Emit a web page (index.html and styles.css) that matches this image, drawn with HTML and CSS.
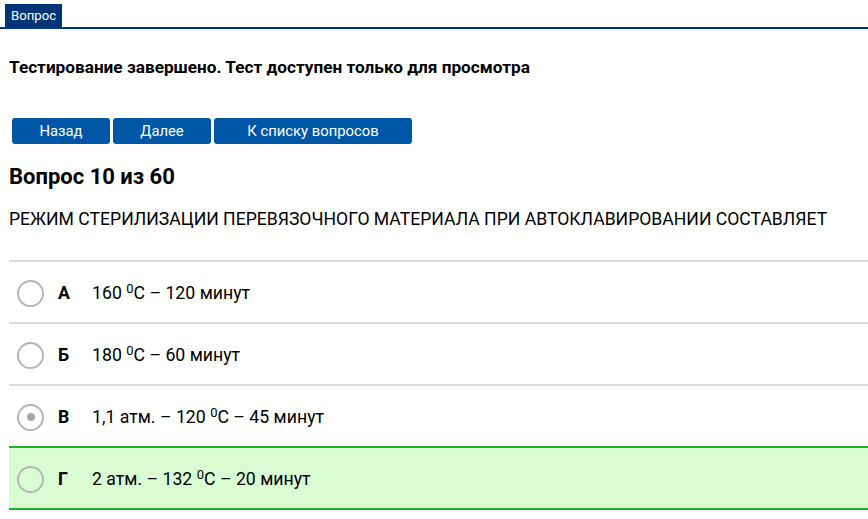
FILE: index.html
```html
<!DOCTYPE html>
<html lang="ru">
<head>
<meta charset="utf-8">
<title>Вопрос</title>
<link rel="stylesheet" href="styles.css">
</head>
<body>
<div class="tabs"><span class="tab">Вопрос</span></div>
<div class="content">
  <div class="status">Тестирование завершено. Тест доступен только для просмотра</div>
  <div class="nav">
    <button class="btn btn-sm">Назад</button>
    <button class="btn btn-sm">Далее</button>
    <button class="btn btn-lg">К списку вопросов</button>
  </div>
  <h2 class="qnum">Вопрос 10 из 60</h2>
  <div class="qtext">РЕЖИМ СТЕРИЛИЗАЦИИ ПЕРЕВЯЗОЧНОГО МАТЕРИАЛА ПРИ АВТОКЛАВИРОВАНИИ СОСТАВЛЯЕТ</div>
  <ul class="answers">
    <li class="answer"><span class="radio"></span><span class="letter">А</span><span class="atext">160 <sup>0</sup>С – 120 минут</span></li>
    <li class="answer"><span class="radio"></span><span class="letter">Б</span><span class="atext">180 <sup>0</sup>С – 60 минут</span></li>
    <li class="answer"><span class="radio checked"></span><span class="letter">В</span><span class="atext">1,1 атм. – 120 <sup>0</sup>С – 45 минут</span></li>
    <li class="answer correct"><span class="radio"></span><span class="letter">Г</span><span class="atext">2 атм. – 132 <sup>0</sup>С – 20 минут</span></li>
  </ul>
</div>
</body>
</html>
```
FILE: styles.css
```css
* { box-sizing: border-box; }
body {
  margin: 0;
  font-family: Roboto, "Liberation Sans", Arial, sans-serif;
  color: #000;
  background: #fff;
}
.tabs {
  padding: 4px 0 0 5px;
  border-bottom: 2px solid #003478;
  display: flex;
}
.tab {
  background: #003478;
  color: #fff;
  font-size: 13.2px;
  height: 23px;
  line-height: 23px;
  padding: 0 6px;
}
.content {
  padding-left: 9px;
}
.status {
  margin-top: 29px;
  font-size: 17.2px;
  line-height: 18px;
  font-weight: 700;
}
.nav {
  margin-top: 42px;
  padding-left: 3px;
  display: flex;
  gap: 3px;
}
.btn {
  height: 26px;
  border: none;
  border-radius: 3px;
  background: #0056a6;
  color: #fff;
  font-family: Roboto, "Liberation Sans", Arial, sans-serif;
  font-size: 14.8px;
  line-height: 26px;
  padding: 0;
}
.btn-sm { width: 98px; }
.btn-lg { width: 198px; }
.qnum {
  margin: 21px 0 0;
  font-size: 22px;
  line-height: 24px;
  font-weight: 700;
}
.qtext {
  margin-top: 20px;
  font-size: 17.6px;
  line-height: 20px;
}
.answers {
  list-style: none;
  margin: 31px 0 0;
  padding: 0;
}
.answer {
  display: flex;
  align-items: center;
  height: 62px;
  border-top: 2px solid #dcdcdc;
  padding-left: 8px;
  padding-top: 2px;
  font-size: 17.7px;
}
.answer.correct {
  background: #dafcd3;
  border-top: 2px solid #1db31d;
  border-bottom: 2px solid #1db31d;
  height: 64px;
}
.radio {
  width: 27px;
  height: 27px;
  border: 2px solid #b5b5b5;
  border-radius: 50%;
  display: flex;
  align-items: center;
  justify-content: center;
  flex: none;
}
.radio.checked::after {
  content: "";
  width: 8px;
  height: 8px;
  border-radius: 50%;
  background: #a8a8a8;
}
.letter {
  font-weight: 700;
  margin-left: 14px;
  width: 34px;
}
.atext sup {
  font-size: 13px;
  vertical-align: 0;
  position: relative;
  top: -6px;
  line-height: 0;
}
```
